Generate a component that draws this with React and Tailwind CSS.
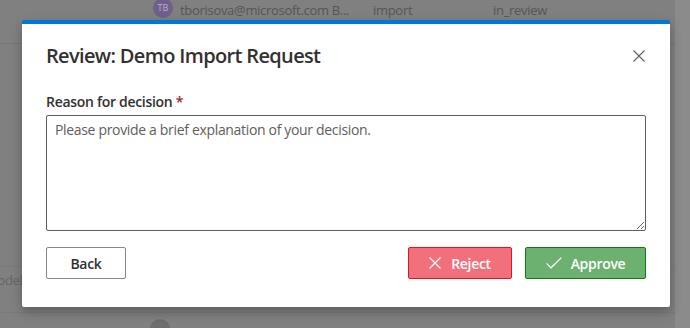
import React from "react";

const font = { fontFamily: '"Segoe UI", "Open Sans", "Noto Sans", sans-serif' };

function XIcon({ size = 12, color = "currentColor", sw = 1.2 }) {
  return (
    <svg width={size} height={size} viewBox="0 0 12 12" fill="none">
      <path d="M0.5 0.5 L11.5 11.5 M11.5 0.5 L0.5 11.5" stroke={color} strokeWidth={sw} />
    </svg>
  );
}

function CheckIcon() {
  return (
    <svg width="16" height="12" viewBox="0 0 16 12" fill="none">
      <path d="M0.6 6.4 L5 10.8 L15.4 0.6" stroke="white" strokeWidth="1.2" />
    </svg>
  );
}

export default function App() {
  return (
    <div
      className="relative w-[690px] h-[328px] overflow-hidden bg-[#808080]"
      style={font}
    >
      {/* background page (dimmed) */}
      <div className="flex h-full">
        <div className="flex-1 flex flex-col">
          <div className="shrink-0 h-[44px] border-b border-[#777] flex items-start">
            <div className="ml-[153px] -mt-[2px] w-[20px] h-[20px] rounded-full bg-[#6e5f8c] flex items-center justify-center text-[9px] text-[#b8b0c8]">
              TB
            </div>
            <div className="ml-[7px] mt-[1px] w-[182px] text-[13px] tracking-[-0.3px] text-[#555] leading-[18px]">
              tborisova@microsoft.com B...
            </div>
            <div className="ml-[11px] mt-[1px] w-[120px] text-[13px] tracking-[-0.3px] text-[#555] leading-[18px]">import</div>
            <div className="mt-[1px] text-[13px] tracking-[-0.3px] text-[#555] leading-[18px]">in_review</div>
          </div>
          <div className="shrink-0 h-[223px] border-b border-[#7a7a7a]"></div>
          <div className="shrink-0 h-[46px] border-b border-[#7a7a7a] flex items-start pt-[4px]">
            <span className="-ml-[14px] text-[13px] leading-[18px] tracking-[-0.3px] text-[#666]">Model</span>
          </div>
          <div className="shrink-0 flex">
            <div className="ml-[150px] mt-[6px] w-[20px] h-[20px] rounded-full bg-[#6e6e6e]"></div>
          </div>
        </div>
        <div className="w-[15px] h-full bg-[#8b8b8b]"></div>
      </div>

      {/* modal */}
      <div className="absolute left-[22px] top-[20px] w-[648px] h-[287px] bg-white border-t-4 border-[#0078d4] rounded-[2px] shadow-[0_5px_12px_rgba(0,0,0,0.28)] flex flex-col px-[24px] pt-[18px]">
        <div className="flex items-center justify-between h-[28px]">
          <h1 className="text-[20px] leading-[28px] font-semibold tracking-[-0.65px] text-[#323130]">
            Review: Demo Import Request
          </h1>
          <button className="mr-[1px] text-[#605e5c]">
            <XIcon size={12} color="#605e5c" sw={1.1} />
          </button>
        </div>
        <label className="mt-[22px] text-[14px] leading-[20px] font-semibold tracking-[-0.3px] text-[#323130]">
          Reason for decision <span className="text-[#a4262c]">*</span>
        </label>
        <textarea
          className="mt-[3px] w-[600px] h-[116px] border border-[#605e5c] rounded-[2px] px-[8px] py-[4px] text-[14px] leading-[20px] tracking-[-0.33px] text-[#323130] placeholder:text-[#605e5c] outline-none"
          placeholder="Please provide a brief explanation of your decision."
        />
        <div className="mt-[16px] flex items-center w-[600px]">
          <button className="w-[80px] h-[32px] border border-[#8a8886] rounded-[2px] bg-white text-[14px] font-semibold tracking-[-0.3px] text-[#323130]">
            Back
          </button>
          <div className="flex-1"></div>
          <button className="w-[104px] h-[32px] border border-[#e81123] rounded-[2px] bg-[#f1707b] text-[14px] font-semibold tracking-[-0.3px] text-white flex items-center justify-center gap-[10px]">
            <XIcon size={12} color="white" sw={1.2} />
            Reject
          </button>
          <button className="ml-[13px] w-[121px] h-[32px] border border-[#107c10] rounded-[2px] bg-[#6db170] text-[14px] font-semibold tracking-[-0.3px] text-white flex items-center justify-center gap-[9px]">
            <CheckIcon />
            Approve
          </button>
        </div>
      </div>
    </div>
  );
}
